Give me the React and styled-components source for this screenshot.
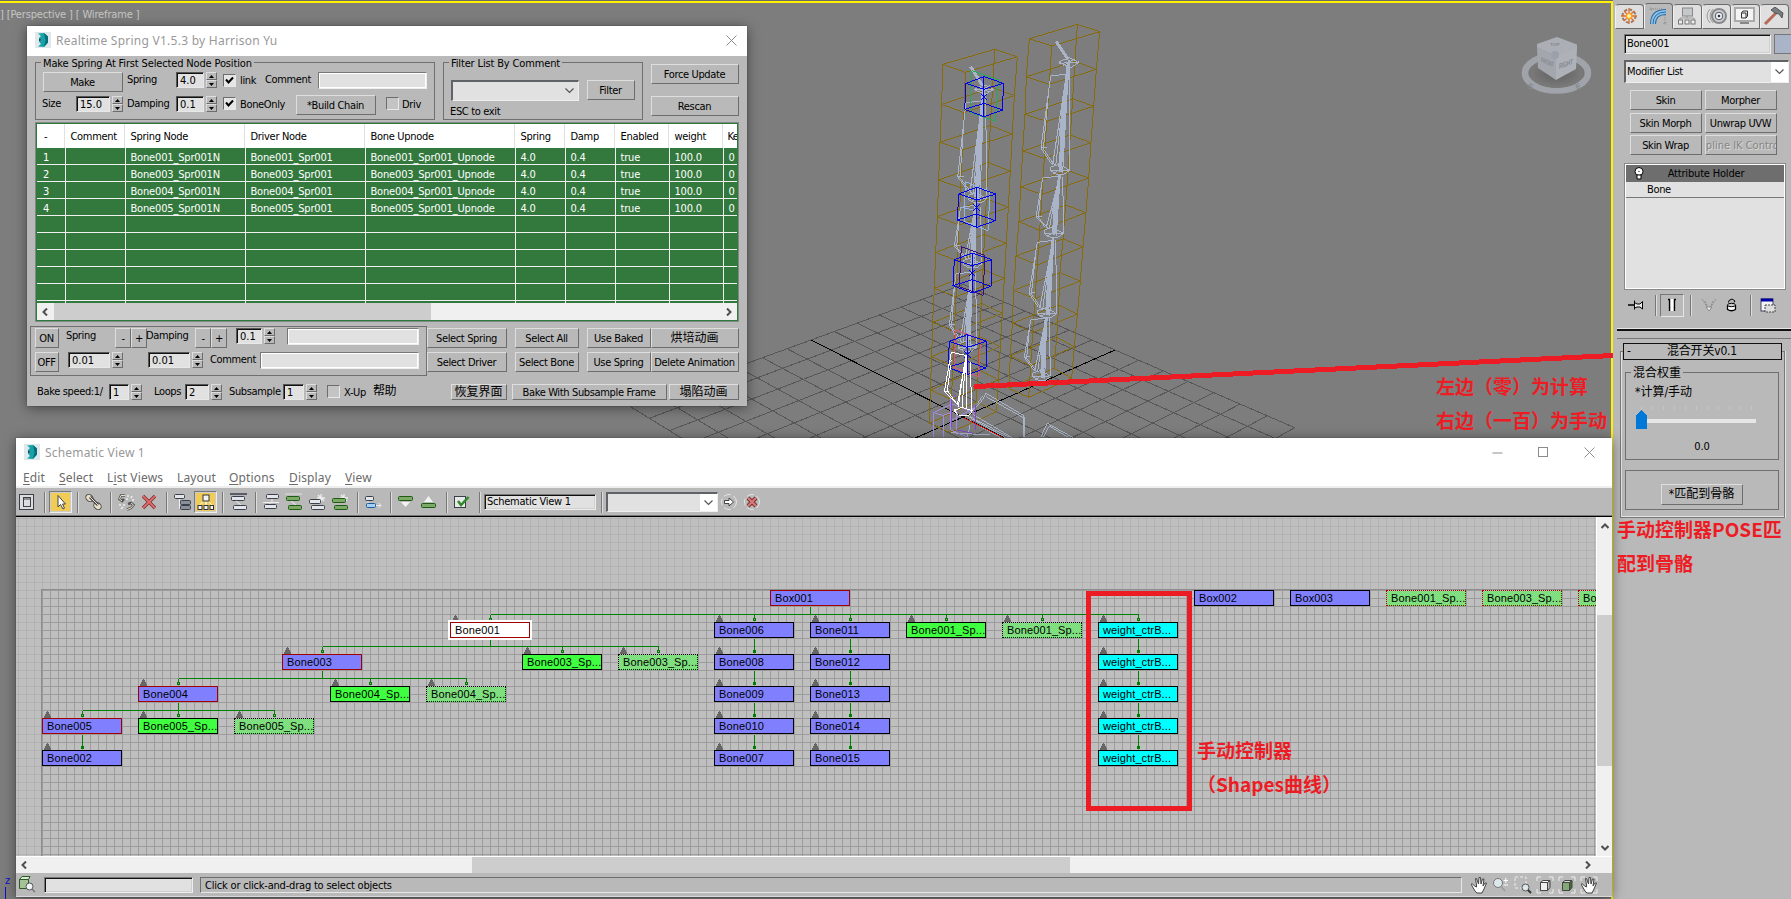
import React from "react";
import styled, { createGlobalStyle, css } from "styled-components";

const Global = createGlobalStyle`
  * { box-sizing: border-box; }
  body { margin: 0; overflow: hidden; background: #7d7d7d; }
`;

const ui = `"DejaVu Sans Condensed", "DejaVu Sans", "Noto Sans CJK SC", sans-serif`;
const caption = `"Noto Sans", "Noto Sans CJK SC", sans-serif`;
const face = "#b9b9b9";
const field = "#e1e1e1";
const bone = "#a9b4c8";
const red = "#ed1c24";

/* Turns a list of start positions into fixed grid tracks. */
const tracks = (starts) =>
  starts.map((s, i) => (i + 1 < starts.length ? `${starts[i + 1] - s}px` : "max-content")).join(" ");

/* ---------- shared controls ---------- */

const Desktop = styled.div`
  display: flex;
  position: relative;
  width: 1791px;
  height: 899px;
  overflow: hidden;
  font: 11px/15px ${ui};
  font-stretch: condensed;
  letter-spacing: -0.35px;
  color: #000;
`;

const Line = styled.div`
  display: grid;
  grid-template-columns: ${(p) => tracks(p.$at)};
  align-items: start;
  height: ${(p) => p.$h}px;
  white-space: nowrap;
`;

const Label = styled.span`
  margin-top: ${(p) => p.$t || 0}px;
  margin-left: -1px;
  height: 15px;
  white-space: nowrap;
`;

const raised = css`
  border: 1px solid;
  border-color: #dedede #6d6d6d #6d6d6d #dedede;
`;

const Button = styled.div`
  ${raised}
  display: flex;
  align-items: center;
  justify-content: center;
  flex: none;
  width: ${(p) => p.$w}px;
  height: ${(p) => p.$h || 20}px;
  padding-right: ${(p) => (p.$w > 20 ? 1 : 0)}px;
  overflow: hidden;
  white-space: nowrap;
  background: ${face};
  color: ${(p) => (p.$off ? "#858585" : "#000")};
  text-shadow: ${(p) => (p.$off ? "1px 1px 0 #dadada" : "none")};
  font-size: ${(p) => (p.$cjk ? 12 : 11)}px;
  letter-spacing: ${(p) => (p.$cjk ? "0" : p.$off ? "0" : "inherit")};
`;

const Input = styled.div`
  width: ${(p) => p.$w}px;
  height: ${(p) => p.$h}px;
  border: 1px solid;
  border-color: #777 #eee #eee #777;
  box-shadow: inset 1px 1px 0 ${(p) => (p.$dark ? "#111" : "#fff")}, inset -1px -1px 0 ${(p) => (p.$dark ? "#cfcfcf" : "#fff")};
  background: ${field};
  padding: 0 2px;
  line-height: ${(p) => p.$h - 2}px;
  letter-spacing: -0.25px;
`;

const SpinBox = styled.div`
  display: flex;
  gap: 2px;
  width: ${(p) => p.$w}px;
  height: 16px;
  margin-top: ${(p) => p.$t || 0}px;
`;
const SpinField = styled.div`
  flex: 1;
  border: 1px solid;
  border-color: #555 #e8e8e8 #e8e8e8 #555;
  box-shadow: inset 1px 1px 0 #111;
  background: ${field};
  padding-left: 3px;
  line-height: 15px;
  letter-spacing: 0;
`;
const SpinArrows = styled.div`
  display: flex;
  flex-direction: column;
  width: 11px;
`;
const SpinArrow = styled.div`
  ${raised}
  flex: 1;
  display: flex;
  align-items: center;
  justify-content: center;
  svg { display: block; }
`;

function Spinner({ w, t, children }) {
  return (
    <SpinBox $w={w} $t={t}>
      <SpinField>{children}</SpinField>
      <SpinArrows>
        <SpinArrow><svg width="5" height="3"><path d="M0 3L2.5 0L5 3Z" /></svg></SpinArrow>
        <SpinArrow><svg width="5" height="3"><path d="M0 0L2.5 3L5 0Z" /></svg></SpinArrow>
      </SpinArrows>
    </SpinBox>
  );
}

const CheckFrame = styled.div`
  width: 13px;
  height: 13px;
  margin-top: ${(p) => p.$t}px;
  border: 1px solid;
  border-color: #6d6d6d #e8e8e8 #e8e8e8 #6d6d6d;
  background: ${(p) => (p.$on ? "#e6e6e6" : "#c4c4c4")};
  svg { display: block; }
`;
const Check = ({ on, t }) => (
  <CheckFrame $on={on} $t={t}>
    {on && <svg width="11" height="11"><path d="M2 4.5L4.5 7.5L9 2.5" fill="none" stroke="#000" strokeWidth="2" /></svg>}
  </CheckFrame>
);

const Group = styled.div`
  position: relative;
  flex: none;
  width: ${(p) => p.$w}px;
  height: ${(p) => p.$h}px;
  margin-left: ${(p) => p.$ml || 0}px;
  padding: ${(p) => p.$pad || "0"};
  border: 1px solid #6f6f6f;
`;
const Legend = styled.span`
  position: absolute;
  top: -7px;
  left: 5px;
  padding: 0 2px;
  background: ${face};
  white-space: nowrap;
  font-size: ${(p) => (p.$cjk ? 12 : 11)}px;
  letter-spacing: ${(p) => (p.$cjk ? 0 : -0.15)}px;
`;

const Combo = styled.div`
  display: flex;
  width: ${(p) => p.$w}px;
  height: ${(p) => p.$h}px;
  border: 2px solid;
  border-width: 2px 1px 1px 2px;
  border-color: #5f6368 #eee #eee #5f6368;
  background: ${field};
  padding-left: 1px;
`;
const ComboText = styled.div`
  flex: 1;
  line-height: ${(p) => p.$lh || 18}px;
`;
const ComboDrop = styled.div`
  display: flex;
  align-items: center;
  justify-content: center;
  width: 17px;
  background: ${(p) => (p.$white ? "#fff" : "transparent")};
`;
const Chevron = () => (
  <svg width="9" height="6"><path d="M.5 .5L4.5 4.5L8.5 .5" fill="none" stroke="#555" strokeWidth="1.2" /></svg>
);

/* ---------- viewport scene ---------- */

const Viewport = styled.div`
  position: relative;
  flex: none;
  width: 1613px;
  height: 899px;
  background: #7d7d7d;
  border-top: 1px solid #6c6c6c;
  svg.scene { display: block; margin-top: -1px; }
`;
const ViewFrame = styled.div`
  position: absolute;
  inset: 0 0 0 -2px;
  border: 2px solid #fff200;
  border-bottom-width: 0;
`;
const ViewLabel = styled.div`
  position: absolute;
  left: 0;
  top: 6px;
  color: #c6c6c6;
  letter-spacing: -0.15px;
  white-space: pre;
`;

const K = [963.3, 284.4], P2 = [1115, 350], C = [963, 417], P1 = [811, 340];
const floor = (() => {
  const sx = K[0] - P2[0] + C[0] - P1[0], sy = K[1] - P2[1] + C[1] - P1[1];
  const ax = P2[0] - C[0], ay = P2[1] - C[1], bx = P1[0] - C[0], by = P1[1] - C[1];
  const det = ax * by - bx * ay;
  const g = (sx * by - bx * sy) / det, h = (ax * sy - sx * ay) / det;
  return (u, v) => {
    const w = g * u + h * v + 1;
    const x = ((P2[0] - K[0] + g * P2[0]) * u + (P1[0] - K[0] + h * P1[0]) * v + K[0]) / w;
    const y = ((P2[1] - K[1] + g * P2[1]) * u + (P1[1] - K[1] + h * P1[1]) * v + K[1]) / w;
    return `${x.toFixed(1)} ${y.toFixed(1)}`;
  };
})();
const gridPath = Array.from({ length: 15 }, (_, i) => i)
  .filter((i) => i !== 7)
  .map((i) => `M${floor(i / 7, 0)}L${floor(i / 7, 2)}M${floor(0, i / 7)}L${floor(2, i / 7)}`)
  .join("");
const axisPath = `M${floor(1, 0)}L${floor(1, 2)}M${floor(0, 1)}L${floor(2, 1)}`;

const tower = (A, B, Cc, D) => {
  let d = A.map((a, i) => `M${a}L${B[i]}L${Cc[i]}L${D[i]}Z`).join("");
  for (const e of [A, B, Cc, D]) d += `M${e.join("L")}`;
  return d;
};
const zip = (xs, ys) => xs.map((x, i) => `${x} ${ys[i]}`);
const leftTower = tower(
  zip([158, 155, 150, 146, 142, 137, 133, 128, 125, 121, 118], [193, 313, 427, 540, 650, 757, 865, 967, 1070, 1170, 1270]),
  zip([314, 308, 301, 295, 289, 284, 279, 274, 269, 264, 259], [148, 263, 377, 487, 597, 703, 808, 910, 1010, 1108, 1205]),
  zip([382, 373, 367, 361, 355, 349, 343, 337, 331, 325, 320], [170, 287, 402, 514, 622, 730, 835, 940, 1040, 1140, 1235]),
  zip([226, 222, 217, 212, 207, 203, 198, 193, 189, 184, 180], [217, 338, 450, 563, 675, 783, 890, 995, 1098, 1198, 1298])
);
const rightTower = tower(
  zip([418, 409, 405, 398, 392, 387, 378, 371, 367, 361, 356], [116, 230, 343, 453, 561, 665, 768, 871, 970, 1068, 1165]),
  zip([562, 555, 548, 541, 534, 527, 519, 510, 506, 500, 492], [73, 184, 296, 405, 512, 615, 717, 818, 915, 1012, 1105]),
  zip([629, 619, 611, 603, 596, 588, 579, 571, 562, 553, 545], [95, 208, 319, 428, 534, 638, 741, 843, 942, 1040, 1135]),
  zip([485, 478, 470, 463, 456, 449, 442, 435, 428, 422, 416], [138, 253, 364, 475, 583, 691, 795, 896, 998, 1097, 1192])
);

/* One bone: a spindle fanning from its upper joint (x1,y1) to a ring at (x2,y2), a side fin and a right-hand edge. */
const boneShape = (x1, y1, x2, y2, finTop, finBottom, rightX) => {
  const [fx, fy] = finTop, [gx, gy] = finBottom;
  return [
    `M${x1} ${y1}L${x2 - 22} ${y2 - 20}M${x1 - 2} ${y1}L${x2 - 13} ${y2 - 18}M${x1} ${y1}L${x2 - 4} ${y2 - 14}M${x1 + 2} ${y1}L${x2 + 3} ${y2 - 6}M${x1 + 2} ${y1}L${x2 + 8} ${y2 + 4}M${x1 - 4} ${y1 + 30}L${x2 - 22} ${y2 - 24}`,
    `M${rightX} ${y1}L${rightX + 3} ${y2 - 4}`,
    `M${x2 - 27} ${y2 - 14}L${x2 - 4} ${y2 - 22}L${rightX + 3} ${y2 - 4}L${x2 + 12} ${y2 + 8}L${x2 - 10} ${y2 + 8}L${x2 - 27} ${y2 - 2}Z`,
    `M${x2 - 27} ${y2 - 4}L${rightX} ${y2 - 4}M${x2 - 20} ${y2 + 5}L${x2 + 10} ${y2 - 12}`,
    `M${x1} ${fy - 6}L${fx} ${fy}L${gx} ${gy}L${x2 - 26} ${y2 - 24}M${fx - 4} ${fy + 24}L${gx + 7} ${gy + 3}L${x2 - 14} ${y2 - 16}M${gx} ${gy}L${gx + 18} ${gy - 2}`,
  ].join("");
};
/* Solid upper part of a bone, where its edges run together. */
const boneCore = (x1, y1, x2, y2) => {
  const mx = x1 + (x2 - x1) * 0.55, my = y1 + (y2 - y1) * 0.55;
  return `M${x1 - 4} ${y1}L${x1 + 4} ${y1}L${mx + 7} ${my}L${x2 + 5} ${y2}L${x2 - 3} ${y2}L${mx - 9} ${my}Z`;
};
const joints = [
  [534, 190, 510, 515], [508, 530, 491, 704], [489, 720, 471, 945], [468, 955, 456, 1133],
  [279, 280, 258, 590], [256, 620, 247, 790], [245, 820, 232, 1040],
];
const cube = (x, y) =>
  `M${x} ${y}l54 -20l58 20l-58 18zM${x - 4} ${y + 78}l58 -18l56 20l-56 20zM${x} ${y}l-4 78M${x + 54} ${y - 20}v80M${x + 112} ${y}l-2 80M${x + 54} ${y + 18}v82M${x + 44} ${y + 30}l20 20M${x + 64} ${y + 30}l-20 20`;

const Scene = () => (
  <svg className="scene" width="1613" height="899" shapeRendering="crispEdges" fill="none">
    <path d={gridPath} stroke="#575757" />
    <path d={axisPath} stroke="#000" />
    <g transform="translate(890 0) scale(.33333)" strokeWidth="3">
      <path d={rightTower + leftTower} stroke="#866c0c" />
      <path d={joints.map((j) => boneCore(...j)).join("")} fill={bone} />
      <g stroke={bone}>
        <path strokeWidth="9" d="M498 124L534 178M242 200L277 256" />
        <path d="M508 186L537 172L566 188L540 204ZM508 190L566 186M520 196L556 176M252 268L281 254L312 268L285 284ZM252 268L312 268M266 276L300 256M266 258L296 276" />
        <path strokeWidth="7" d="M537 180L510 515M509 525L490 700M490 710L470 945M470 950L456 1130M281 270L256 590M257 610L247 790M247 800L232 1040" />
        <path d={boneShape(534, 190, 510, 515, [482, 228], [453, 444], 537)} />
        <path d={boneShape(508, 530, 491, 704, [458, 534], [438, 650], 518)} />
        <path d={boneShape(489, 720, 471, 945, [442, 727], [417, 880], 497)} />
        <path d={boneShape(468, 955, 456, 1133, [422, 960], [403, 1072], 478)} />
        <path d={boneShape(279, 280, 262, 600, [228, 308], [203, 530], 287)} />
        <path d={boneShape(256, 620, 247, 796, [212, 622], [193, 738], 272)} />
        <path d={boneShape(245, 820, 232, 1046, [198, 822], [178, 975], 257)} />
        <path d="M272 1208L288 1180L400 1246V1312M262 1212L278 1188M288 1190L402 1254V1312M404 1250V1312M235 1250L345 1312M240 1250L358 1312M250 1244L365 1312M236 1240L272 1208M240 1262L330 1312M452 1312L472 1270L548 1312M460 1312L478 1278L535 1312M182 1298L300 1305M240 1275L232 1312" />
      </g>
      <path d="M245 212L326 240L316 364L240 336ZM326 240V250" stroke="#1fae5c" />
      <path d="M226 545L300 575L294 692L222 664ZM212 622L250 630" stroke="#8fb4e8" />
      <path d="M214 740L284 766L280 886L208 860Z" stroke="#3b0f7a" />
      <path d="M198 990L272 1018L265 1130L192 1102Z" stroke="#e0508a" />
      <path d={cube(228, 250) + cube(206, 582) + cube(193, 779) + cube(178, 1024)} stroke="#0000f0" />
      <path d="M130 1312V1238L186 1212L256 1240V1290M130 1238L160 1246V1312M160 1246L200 1232V1290M182 1190V1290L236 1312M182 1262L256 1222" stroke="#a38be0" />
      <path d="M188 1182L200 1192M184 1195V1280M256 1215V1290M200 1290L250 1300" stroke="#8448c8" />
      <path stroke="#fff" d="M228 1066L184 1057L177 1095L163 1175L205 1216M182 1095L172 1172L198 1208M228 1070L202 1215M222 1100L205 1220M226 1090L216 1225M231 1066V1225M228 1066V1120M240 1085L246 1235M192 1232L215 1222L248 1232L236 1246L206 1246ZM192 1226L200 1240M176 1095L184 1080M163 1175H176" />
      <path d="M222 1254L338 1312" stroke="#d01818" />
    </g>
    <ViewCube />
    <path d="M5.500 887V899" stroke="#1010c8" />
  </svg>
);

const CubeLetter = styled.text`
  font: bold 8px "Liberation Sans", sans-serif;
  letter-spacing: -0.4px;
  fill: #858a91;
`;
const ViewCube = () => (
  <g shapeRendering="auto">
    <defs>
      <radialGradient id="well"><stop offset="0" stopColor="#5f5f5f" /><stop offset="1" stopColor="#808080" /></radialGradient>
    </defs>
    <ellipse cx="1556.500" cy="73" rx="31.500" ry="17.500" fill="url(#well)" stroke="#a0a4aa" strokeWidth="6.500" />
    <ellipse cx="1556.500" cy="73" rx="27" ry="14.500" stroke="#757575" />
    <path d="M1557 37L1577 44.500V49L1556.500 56L1537 47.500V44Z" fill="#abafb5" />
    <path d="M1537 47L1556 56V80L1538 68Z" fill="#a3a7ad" />
    <path d="M1577 48L1556 56V80L1576 69Z" fill="#aeb2b8" />
    <circle cx="1555" cy="55" r="4" fill="#9aa1aa" />
    <CubeLetter transform="translate(1541 62) skewY(22) scale(.5 .9)">FRONT</CubeLetter>
    <CubeLetter transform="translate(1559 69) skewY(-20) scale(.6 .95)">RIGHT</CubeLetter>
    <CubeLetter transform="translate(1550 46) scale(.65 .55)">TOP</CubeLetter>
    <CubeLetter transform="translate(1527 88) rotate(20)">S</CubeLetter>
    <CubeLetter transform="translate(1577 90) rotate(-25)">E</CubeLetter>
  </g>
);
const AxisLetter = styled.div`
  position: absolute;
  left: 5px;
  top: 872px;
  color: #1010c8;
`;

/* ---------- floating windows ---------- */

const Window = styled.div`
  position: absolute;
  left: ${(p) => p.$x}px;
  top: ${(p) => p.$y}px;
  width: ${(p) => p.$w}px;
  height: ${(p) => p.$h}px;
  display: flex;
  flex-direction: column;
  background: ${face};
  box-shadow: 0 2px 12px rgba(0, 0, 0, 0.45), 0 0 1px rgba(0, 0, 0, 0.5);
  overflow: hidden;
  isolation: isolate;
`;
const TitleBar = styled.div`
  display: flex;
  align-items: center;
  flex: none;
  height: ${(p) => p.$h}px;
  padding: 0 0 ${(p) => p.$pb || 0}px 8px;
  gap: 5px;
  background: #fff;
  color: #999;
  font: 12px ${caption};
  letter-spacing: ${(p) => p.$ls}px;
  svg { flex: none; }
`;
const TitleText = styled.span`
  flex: 1;
`;
const AppMark = () => (
  <svg width="16" height="16">
    <rect width="16" height="16" fill="#dfe9ec" />
    <path d="M3 1.500L9 1L13 4.500V10.500L9 15L3 14.500L6 12L4 9.500L7 8L4 6L6 4Z" fill="#14a3a8" />
    <path d="M9 1L13 4.500V10.500L9 15L10.500 8Z" fill="#0a6e78" />
    <path d="M4 6L7 8L4 9.500Z" fill="#0b4f5c" />
  </svg>
);
const CaptionButtons = styled.div`
  display: flex;
  gap: ${(p) => p.$gap || 0}px;
  padding-right: ${(p) => p.$pr}px;
  svg { display: block; fill: none; stroke: #8c8c8c; }
`;
const CloseMark = () => <svg width="11" height="11"><path d="M.5 .5L10.500 10.500M10.500 .5L.5 10.500" /></svg>;

/* Spring list */
const TopRow = styled.div`
  display: flex;
  height: 66px;
  padding: 6px 0 0 8px;
`;
const SideButtons = styled.div`
  display: flex;
  flex-direction: column;
  gap: 12px;
  padding: 2px 0 0 8px;
`;
const FilterRow = styled.div`
  display: flex;
  gap: 8px;
  height: 24px;
`;
const ListFrame = styled.div`
  flex: none;
  width: 704px;
  height: 200px;
  margin-left: 8px;
  border: 1px solid #7f8a86;
  box-shadow: inset 0 0 0 1px #2e7a3c;
  padding: 1px;
  overflow: hidden;
`;
const listGrid = "60px 120px 120px 150px 50px 50px 54px 54px 14px";
const ListHead = styled.div`
  display: grid;
  grid-template-columns: 28px ${listGrid};
  height: 24px;
  background: #fff;
  letter-spacing: -0.3px;
`;
const HeadCell = styled.div`
  border-right: 1px solid #e0e0e0;
  padding-left: 5.5px;
  line-height: 25px;
  overflow: hidden;
  white-space: nowrap;
  &:first-child { padding-left: 7px; }
  &:last-child { padding-left: 4.5px; border-right: 0; letter-spacing: -0.8px; }
`;
const ListBody = styled.div`
  height: 155px;
  overflow: hidden;
  background: #33783d;
  color: #fff;
  letter-spacing: -0.17px;
`;
const ListRow = styled.div`
  display: grid;
  grid-template-columns: 29px ${listGrid};
  height: 17px;
  border-bottom: 1px solid #f0f0f0;
`;
const ListCell = styled.div`
  border-right: 1px solid #f0f0f0;
  padding-left: 4.5px;
  line-height: 20px;
  height: 16px;
  overflow: hidden;
  white-space: nowrap;
  &:first-child { padding-left: 6px; }
`;
const HBar = styled.div`
  display: flex;
  align-items: center;
  height: ${(p) => p.$h}px;
  background: #f0f0f0;
  svg { fill: none; stroke: #4f4f4f; stroke-width: 2; }
`;
const HThumb = styled.div`
  width: ${(p) => p.$w}px;
  height: 100%;
  margin: 0 auto 0 ${(p) => p.$ml}px;
  background: #cdcdcd;
`;
const BarArrow = styled.div`
  display: flex;
  align-items: center;
  justify-content: center;
  width: 16px;
  height: 17px;
`;
const BottomRow = styled.div`
  display: flex;
  height: 62px;
  padding: 4px 0 0 3px;
`;
const ActionRows = styled.div`
  padding-top: 2px;
`;

const heads = ["-", "Comment", "Spring Node", "Driver Node", "Bone Upnode", "Spring", "Damp", "Enabled", "weight", "Ke"];
const rows = ["001", "003", "004", "005"].map((n, i) => [
  String(i + 1), "", `Bone${n}_Spr001N`, `Bone${n}_Spr001`, `Bone${n}_Spr001_Upnode`, "4.0", "0.4", "true", "100.0", "0",
]);
const blank = Array(10).fill("");

const SpringWindow = () => (
  <Window $x={27} $y={26} $w={720} $h={380}>
    <TitleBar $h={30} $pb={2} $ls={0.25}>
      <AppMark />
      <TitleText>Realtime Spring V1.5.3 by Harrison Yu</TitleText>
      <CaptionButtons $pr={10}><CloseMark /></CaptionButtons>
    </TitleBar>
    <TopRow>
      <Group $w={400} $h={58} $pad="9px 0 0 7px">
        <Legend>Make Spring At First Selected Node Position</Legend>
        <Line $h={23} $at={[43, 128, 176, 223, 241, 266, 318]}>
          <Button $w={80}>Make</Button>
          <Label>Spring</Label>
          <Spinner w={41}>4.0</Spinner>
          <Check on t={2} />
          <Label $t={1}>link</Label>
          <Label>Comment</Label>
          <Input $w={109} $h={17} />
        </Line>
        <Line $h={23} $at={[43, 76, 128, 176, 223, 241, 296, 386, 403]}>
          <Label $t={1}>Size</Label>
          <Spinner w={47} t={1}>15.0</Spinner>
          <Label $t={1}>Damping</Label>
          <Spinner w={41} t={1}>0.1</Spinner>
          <Check on t={2} />
          <Label $t={2}>BoneOnly</Label>
          <Button $w={80}>*Build Chain</Button>
          <Check t={2} />
          <Label $t={2}>Driv</Label>
        </Line>
      </Group>
      <Group $w={200} $h={58} $ml={8} $pad="17px 0 0 7px">
        <Legend>Filter List By Comment</Legend>
        <FilterRow>
          <Combo $w={128} $h={21}><ComboText /><ComboDrop><Chevron /></ComboDrop></Combo>
          <Button $w={48}>Filter</Button>
        </FilterRow>
        <Label>ESC to exit</Label>
      </Group>
      <SideButtons>
        <Button $w={88}>Force Update</Button>
        <Button $w={88}>Rescan</Button>
      </SideButtons>
    </TopRow>
    <ListFrame>
      <ListHead>{heads.map((h) => <HeadCell key={h}>{h}</HeadCell>)}</ListHead>
      <ListBody>
        {[...rows, blank, blank, blank, blank, blank, blank].map((r, i) => (
          <ListRow key={i}>{r.map((c, j) => <ListCell key={j}>{c}</ListCell>)}</ListRow>
        ))}
      </ListBody>
      <HBar $h={17}>
        <BarArrow><svg width="6" height="8"><path d="M5 .5L1.500 4L5 7.500" /></svg></BarArrow>
        <HThumb $w={377} $ml={1} />
        <BarArrow><svg width="6" height="8"><path d="M1 .5L4.500 4L1 7.500" /></svg></BarArrow>
      </HBar>
    </ListFrame>
    <BottomRow>
      <Group $w={397} $h={50} $pad="1px 0 0 4px">
        <Line $h={24} $at={[35, 67, 115, 131, 147, 195, 211, 236, 287]}>
          <Button $w={24}>ON</Button>
          <Label>Spring</Label>
          <Button $w={16}>-</Button>
          <Button $w={16}>+</Button>
          <Label>Damping</Label>
          <Button $w={16}>-</Button>
          <Button $w={16}>+</Button>
          <Spinner w={39}>0.1</Spinner>
          <Input $w={132} $h={17} />
        </Line>
        <Line $h={22} $at={[35, 68, 148, 211, 260]}>
          <Button $w={24}>OFF</Button>
          <Spinner w={55}>0.01</Spinner>
          <Spinner w={55}>0.01</Spinner>
          <Label>Comment</Label>
          <Input $w={159} $h={17} />
        </Line>
      </Group>
      <ActionRows>
        <Line $h={24} $at={[427, 515, 587, 651]}>
          <Button $w={80}>Select Spring</Button>
          <Button $w={64}>Select All</Button>
          <Button $w={64}>Use Baked</Button>
          <Button $w={88} $cjk>烘培动画</Button>
        </Line>
        <Line $h={24} $at={[427, 515, 587, 651]}>
          <Button $w={80}>Select Driver</Button>
          <Button $w={64}>Select Bone</Button>
          <Button $w={64}>Use Spring</Button>
          <Button $w={88}>Delete Animation</Button>
        </Line>
      </ActionRows>
    </BottomRow>
    <BakeLine $h={16} $at={[38, 109, 155, 185, 230, 283, 327, 345, 374, 451, 512, 669]}>
      <Label>Bake speed:1/</Label>
      <Spinner w={33}>1</Spinner>
      <Label>Loops</Label>
      <Spinner w={37}>2</Spinner>
      <Label>Subsample</Label>
      <Spinner w={34}>1</Spinner>
      <Check t={1} />
      <Label $t={1}>X-Up</Label>
      <CjkLabel>帮助</CjkLabel>
      <Button $w={56} $h={16} $cjk>恢复界面</Button>
      <Button $w={155} $h={16}>Bake With Subsample Frame</Button>
      <Button $w={70} $h={16} $cjk>塌陷动画</Button>
    </BakeLine>
  </Window>
);
const BakeLine = styled(Line)`
  margin-left: 11px;
`;
const CjkLabel = styled(Label)`
  font-size: 12px;
  letter-spacing: -0.5px;
`;

/* ---------- schematic window ---------- */

const MenuBar = styled.div`
  display: grid;
  grid-template-columns: ${tracks([23, 59, 107, 177, 229, 289, 345])};
  height: 22px;
  flex: none;
  padding: 3px 0 0 7px;
  background: #fff;
  color: #6a6a6a;
  font: 12px/17px ${caption};
  letter-spacing: 0.15px;
  border-bottom: 2px solid #eee;
  u { text-underline-offset: 2px; }
`;
const Toolbar = styled.div`
  display: grid;
  grid-template-columns: ${(p) => tracks(p.$at)};
  align-items: center;
  height: 29px;
  flex: none;
  padding-left: 3px;
  border-bottom: 1px solid #000;
  box-shadow: inset 0 -1px 0 #777;
  svg { display: block; fill: none; }
`;
const Divider = styled.div`
  width: 2px;
  height: 21px;
  border-left: 1px solid #777;
  border-right: 1px solid #ddd;
`;
const Pressed = styled.div`
  display: flex;
  align-items: center;
  justify-content: center;
  width: 23px;
  height: 22px;
  border: 1px solid;
  border-color: #777 #eee #eee #777;
  box-shadow: inset 0 0 0 1px #ccc;
  background: #f0cb56;
`;
const Icon = ({ children }) => <svg width="18" height="18">{children}</svg>;

const ink = "#3a3f4a";
const Bar = ({ x, y, w = 13, fill = "#e4e6ec", stroke = ink }) => (
  <rect x={x + 0.5} y={y + 0.5} width={w} height="4" rx="1" fill={fill} stroke={stroke} />
);
const green = { fill: "#7da968", stroke: "#1d5a12" };
const Star = ({ x, y }) => <path d={`M${x} ${y - 4}V${y + 4}M${x - 4} ${y}H${x + 4}M${x - 3} ${y - 3}L${x + 3} ${y + 3}`} stroke="#eee" strokeWidth="1.300" />;

const Canvas = styled.div`
  position: relative;
  flex: 1;
  overflow: hidden;
  background: #bfbfbf;
  background-image: linear-gradient(90deg, transparent 2px, #b2b2b2 2px, #b2b2b2 3px, transparent 3px),
    linear-gradient(transparent 1px, #b2b2b2 1px, #b2b2b2 2px, transparent 2px);
  background-size: 8px 8px;
`;
const Sheet = styled.div`
  position: absolute;
  left: 25px;
  top: 72px;
  right: 0;
  bottom: 0;
  border: 1px solid #8c8c8c;
  border-width: 1px 0 0 1px;
  background-color: #bfbfbf;
  background-image: linear-gradient(90deg, #9c9c9c 1px, transparent 1px), linear-gradient(#9c9c9c 1px, transparent 1px);
  background-size: 8px 8px;
`;
const Links = styled.svg`
  position: absolute;
  inset: 0;
  fill: none;
`;
const dither = "conic-gradient(#40ff40 25%, #bfbfbf 0 50%, #40ff40 0 75%, #bfbfbf 0) 0 0 / 2px 2px";
const kinds = {
  bone: { bg: "#8080ff", bd: "1px solid #000" },
  boneRed: { bg: "#8080ff", bd: "1px solid #a00000" },
  picked: { bg: "#fff", bd: "1px solid #a00000" },
  green: { bg: "#40ff40", bd: "1px solid #000" },
  pale: { bg: dither, bd: "1px dotted #000" },
  paleRed: { bg: dither, bd: "1px dotted #a00000" },
  cyan: { bg: "#00ffff", bd: "1px solid #000" },
};
const Node = styled.div`
  position: absolute;
  left: ${(p) => p.$x - 16}px;
  top: ${(p) => p.$y - 517}px;
  width: 80px;
  height: 16px;
  padding-left: 4px;
  border: ${(p) => kinds[p.$kind].bd};
  background: ${(p) => kinds[p.$kind].bg};
  box-shadow: ${(p) => (p.$kind === "picked" ? "0 0 0 2px #fff" : "none")};
  color: #000;
  font: 11px/14px "Liberation Sans", sans-serif;
  letter-spacing: ${(p) => (p.$kind === "cyan" ? 0.1 : 0.12)}px;
  white-space: nowrap;
`;

const Y = [590, 622, 654, 686, 718, 750];
const nodes = [
  ["Box001", 770, 0, "boneRed"], ["Bone001", 450, 1, "picked"],
  ["Bone003", 282, 2, "boneRed"], ["Bone003_Sp...", 522, 2, "green"], ["Bone003_Sp...", 618, 2, "pale"],
  ["Bone004", 138, 3, "boneRed"], ["Bone004_Sp...", 330, 3, "green"], ["Bone004_Sp...", 426, 3, "pale"],
  ["Bone005", 42, 4, "boneRed"], ["Bone005_Sp...", 138, 4, "green"], ["Bone005_Sp...", 234, 4, "pale"],
  ["Bone002", 42, 5, "bone"],
  ...["Bone006", "Bone008", "Bone009", "Bone010", "Bone007"].map((n, i) => [n, 714, i + 1, "bone"]),
  ...["Bone011", "Bone012", "Bone013", "Bone014", "Bone015"].map((n, i) => [n, 810, i + 1, "bone"]),
  ["Bone001_Sp...", 906, 1, "green"], ["Bone001_Sp...", 1002, 1, "pale"],
  ...[1, 2, 3, 4, 5].map((i) => ["weight_ctrB...", 1098, i, "cyan"]),
  ["Box002", 1194, 0, "bone"], ["Box003", 1290, 0, "bone"],
  ["Bone001_Sp...", 1386, 0, "paleRed"], ["Bone003_Sp...", 1482, 0, "paleRed"], ["Bone004_Sp...", 1578, 0, "paleRed"],
];
const buses = [[810, 614, 490, 1138], [490, 646, 322, 658], [322, 678, 178, 466], [178, 710, 82, 274]];
const stems = [714, 810, 1098].flatMap((x) => [1, 2, 3, 4].map((r) => [x + 40, Y[r] + 16])).concat([[82, 734]]);

const Schematic = () => (
  <Canvas>
    <Sheet />
    <Links width="1580" height="340" shapeRendering="crispEdges">
      <g transform="translate(-15.500 -516.500)" stroke="#008000">
        {buses.map(([p, y, a, b]) => <path key={y} d={`M${p} ${y - 8}V${y}M${a} ${y}H${b}`} />)}
        {stems.map(([x, y]) => <path key={`${x}-${y}`} d={`M${x} ${y}V${y + 14}`} />)}
        {nodes.filter((n) => n[2] > 0).map(([, x, r]) => (
          <g key={`${x}-${r}`}>
            <path d={`M${x + 40} ${Y[r] - 8}V${Y[r] - 4}`} />
            <rect x={x + 39} y={Y[r] - 4} width="2" height="2" />
            <path d={`M${x + 1} ${Y[r]}L${x + 4.5} ${Y[r] - 8}L${x + 5.5} ${Y[r] - 8}L${x + 9} ${Y[r]}Z`} fill="#666" stroke="none" />
          </g>
        ))}
      </g>
    </Links>
    {nodes.map(([t, x, r, k]) => <Node key={`${x}-${r}`} $x={x} $y={Y[r]} $kind={k}>{t}</Node>)}
  </Canvas>
);

const CanvasRow = styled.div`
  display: flex;
  flex: none;
  height: 339px;
`;
const VBar = styled.div`
  display: flex;
  flex-direction: column;
  align-items: center;
  width: 16px;
  border-left: 1px solid #fff;
  background: #f0f0f0;
  svg { fill: none; stroke: #4f4f4f; stroke-width: 2; }
`;
const VThumb = styled.div`
  width: 100%;
  height: 151px;
  margin: 81px 0 auto;
  background: #cdcdcd;
`;
const StatusBar = styled.div`
  display: flex;
  align-items: center;
  height: 24px;
  padding: 0 4px 0 3px;
  border-bottom: 1px solid #dadada;
  svg { display: block; fill: none; flex: none; }
`;
const StatusText = styled.div`
  flex: 1;
  margin: 0 8px 0 7px;
  height: 16px;
  padding-left: 4px;
  line-height: 15px;
  border: 1px solid;
  border-color: #6d6d6d #e6e6e6 #e6e6e6 #6d6d6d;
  letter-spacing: -0.2px;
`;
const StatusIcons = styled.div`
  display: flex;
  gap: 4px;
  padding-right: 10px;
`;

const Hand = () => (
  <path d="M4.500 10L2 7.500L1.500 9L5 15L7 17H12L14 13L16.500 7L15 7L13 10L14 3L12.500 3L11 8L10.500 1.500H9L8.500 8L6.500 2.500H5.500L6.500 9V11Z" fill="#fff" stroke="#444" />
);
const Brackets = () => <path d="M5 1H1V5M13 1H17V5M5 17H1V13M13 17H17V13" stroke="#eee" />;
const Box3D = ({ a, b, c }) => (
  <g stroke="#444" strokeLinejoin="round">
    <path d="M4.500 6.500H11.500V14.500H4.500Z" fill={a} /><path d="M4.500 6.500L7 4.500H14L11.500 6.500Z" fill={b} /><path d="M11.500 6.500L14 4.500V11.500L11.500 14.500Z" fill={c} />
  </g>
);

const toolAt = [19, 44, 49, 77, 85, 110, 118, 141, 166, 174, 194, 222, 230, 255, 263, 285, 309, 332, 357, 365, 390, 398, 421, 446, 454, 479, 484, 601, 606, 720, 743];

const SchematicWindow = () => (
  <Window $x={16} $y={438} $w={1596} $h={459}>
    <TitleBar $h={28} $ls={0.18}>
      <AppMark />
      <TitleText>Schematic View 1</TitleText>
      <CaptionButtons $gap={35} $pr={17}>
        <svg width="11" height="11"><path d="M.5 6H10.500" /></svg>
        <svg width="11" height="11"><rect x=".5" y=".5" width="9" height="9" /></svg>
        <CloseMark />
      </CaptionButtons>
    </TitleBar>
    <MenuBar>
      <span><u>E</u>dit</span><span><u>S</u>elect</span><span>L<u>i</u>st Views</span><span>Layout</span>
      <span><u>O</u>ptions</span><span><u>D</u>isplay</span><span><u>V</u>iew</span>
    </MenuBar>
    <Toolbar $at={toolAt}>
      <Icon><rect x=".5" y="1.500" width="14" height="15" fill="#ddd" stroke={ink} /><rect x="4.500" y="4.500" width="7" height="9" stroke={ink} /><path d="M4.500 6H11.500" stroke={ink} /></Icon>
      <Divider />
      <Pressed><Icon><path d="M6 2.500V14L8.500 11.500L11 16L12.500 15.200L10.500 11H13.500Z" fill="#fff" stroke="#444" /></Icon></Pressed>
      <Divider />
      <Icon><g stroke="#4a4a4a" fill="#e8e0c8"><ellipse cx="4.500" cy="5" rx="4" ry="3.200" transform="rotate(40 4.500 5)" /><ellipse cx="12.500" cy="13" rx="4" ry="3.200" transform="rotate(40 12.500 13)" /><path d="M5 4L13 12" strokeWidth="3" /><path d="M5 4L13 12" stroke="#e8e0c8" /></g></Icon>
      <Divider />
      <Icon><path d="M7 2.500H3L1.500 6L4 8L6 6M9 16.500L13 15L15.500 12L13 10L10 11" stroke="#555" strokeWidth="2.500" /><path d="M7 2.500H3L1.500 6L4 8M9 16.500L13 15L15.500 12L13 10" stroke="#e8e0c8" /><path d="M10 2v2M14 3l-1 2M8 6h2M14 7h2M1 12h2M5 14l-2 2M6 11v2" stroke="#eee" strokeWidth="1.500" /></Icon>
      <Icon><path d="M2 3L14 15M14 3L2 15" stroke="#7a2a2a" strokeWidth="3.200" /><path d="M2 3L14 15M14 3L2 15" stroke="#e06a6a" strokeWidth="1.800" /></Icon>
      <Divider />
      <Icon><Bar x={0} y={1} w={10} /><path d="M5.500 6V15.500M5.500 10.500H7M5.500 15H7" stroke="#eee" /><Bar x={6} y={7} w={10} fill="#8a8f99" /><Bar x={6} y={12} w={10} fill="#8a8f99" /></Icon>
      <Pressed><Icon><path d="M9 8V11M2.500 12L7 8M15 12L11 8M9 8V12" stroke="#fff" /><g stroke="#333" fill="#f4f4f4"><rect x="6" y="2" width="6" height="6" /><rect x="1" y="12.500" width="4" height="4" /><rect x="7" y="12.500" width="4" height="4" /><rect x="13" y="12.500" width="3.500" height="4" /></g></Icon></Pressed>
      <Divider />
      <Icon><path d="M0 1H17" stroke={ink} strokeWidth="1.500" /><Bar x={1} y={3} w={13} /><path d="M6 8L11 12" stroke="#eee" /><Bar x={3} y={12} w={13} /></Icon>
      <Divider />
      <Icon><Bar x={3} y={1} w={12} /><path d="M0 9.500H16M9 6V9M7 10V12" stroke="#eee" /><Bar x={1} y={11} w={12} /></Icon>
      <Icon><path d="M0 1H17" stroke="#ddd" /><Bar x={1} y={3} w={13} {...green} /><path d="M6 8L11 12" stroke="#eee" /><Bar x={3} y={12} w={13} {...green} /></Icon>
      <Icon><Star x={12} y={5} /><Bar x={0} y={6} w={11} /><Bar x={2} y={12} w={13} /></Icon>
      <Icon><Star x={12} y={5} /><Bar x={0} y={5} w={13} {...green} /><Bar x={2} y={12} w={13} {...green} /></Icon>
      <Divider />
      <Icon><Bar x={0} y={3} w={8} /><path d="M3 8V11M11 12.500H16M13.500 10L16 12.500L13.500 15" stroke="#eee" /><Bar x={1} y={10} w={9} fill="#a9d0f2" stroke="#1b5f9c" /></Icon>
      <Divider />
      <Icon><Bar x={0} y={3} w={14} {...green} /><path d="M3 9H12L7.500 14Z" fill="#f2f2f2" /></Icon>
      <Icon><path d="M3 9H12L7.500 3Z" fill="#f2f2f2" /><Bar x={0} y={10} w={14} {...green} /></Icon>
      <Divider />
      <Icon><rect x=".5" y="3.500" width="11" height="11" fill="#e8e8e8" stroke={ink} /><path d="M4 8L7 12L14.500 4" stroke="#2f8a2a" strokeWidth="2.500" /></Icon>
      <Divider />
      <Input $w={112} $h={16} $dark>Schematic View 1</Input>
      <Divider />
      <Combo $w={112} $h={20}><ComboText /><ComboDrop $white><Chevron /></ComboDrop></Combo>
      <Icon><circle cx="9" cy="9" r="7.500" stroke="#e6e6e6" strokeDasharray="7 3" /><path d="M4.500 7.500H9V5L13.500 9L9 13V10.500H4.500Z" fill="#fff" stroke="#444" /></Icon>
      <Icon><circle cx="9" cy="9" r="7.500" stroke="#e6e6e6" strokeDasharray="7 3" /><path d="M5 5L13 13M13 5L5 13" stroke="#6a2a2a" strokeWidth="4" /><path d="M5 5L13 13M13 5L5 13" stroke="#e07a7a" strokeWidth="2.300" /></Icon>
    </Toolbar>
    <CanvasRow>
      <Schematic />
      <VBar>
        <BarArrow><svg width="8" height="6"><path d="M.5 5L4 1.500L7.500 5" /></svg></BarArrow>
        <VThumb />
        <BarArrow><svg width="8" height="6"><path d="M.5 1L4 4.500L7.500 1" /></svg></BarArrow>
      </VBar>
    </CanvasRow>
    <SchematicHBar $h={17}>
      <BarArrow><svg width="6" height="8"><path d="M5 .5L1.500 4L5 7.500" /></svg></BarArrow>
      <HThumb $w={598} $ml={440} />
      <BarArrow><svg width="6" height="8"><path d="M1 .5L4.500 4L1 7.500" /></svg></BarArrow>
    </SchematicHBar>
    <StatusBar>
      <svg width="25" height="18"><g transform="translate(-4 -3)"><path d="M4.500 6.500H13.500V15.500H4.500Z" fill="#a4c296" stroke="#2c5a24" /><path d="M4.500 6.500L7 3.500H15L13.500 6.500Z" fill="#dbe8d6" stroke="#2c5a24" /></g><circle cx="10.500" cy="10.500" r="3.500" fill="#f0f4f6" stroke="#555" /><path d="M13 13L16 16" stroke="#777" strokeWidth="1.500" /></svg>
      <Input $w={149} $h={16} $dark />
      <StatusText>Click or click-and-drag to select objects</StatusText>
      <StatusIcons>
        <Icon><Hand /></Icon>
        <Icon><circle cx="6" cy="7" r="4.500" fill="#dce8ec" stroke="#777" /><path d="M9.500 11L13 15" stroke="#999" strokeWidth="1.500" /><path d="M11.500 4.500H16M13.800 2V7M11.500 9H16" stroke="#fff" /></Icon>
        <Icon><path d="M1 1H12V12H1Z" stroke="#eee" strokeDasharray="3 2" /><circle cx="11.500" cy="11.500" r="3.500" fill="#dce8ec" stroke="#555" /><path d="M14 14L17 17" stroke="#333" strokeWidth="2" /></Icon>
        <Icon><Brackets /><Box3D a="#eee" b="#fff" c="#bbb" /></Icon>
        <Icon><Brackets /><Box3D a="#86a877" b="#cfe0c8" c="#3f7030" /></Icon>
        <Icon><Brackets /><Hand /></Icon>
      </StatusIcons>
    </StatusBar>
  </Window>
);
const SchematicHBar = styled(HBar)`
  flex: none;
  border-top: 1px solid #fff;
  padding-right: 16px;
`;

/* ---------- command panel ---------- */

const Panel = styled.div`
  flex: 1;
  height: 899px;
  background: ${face};
`;
const Tabs = styled.div`
  display: flex;
  align-items: flex-end;
  height: 29px;
  padding-left: 2px;
`;
const Tab = styled.div`
  display: flex;
  align-items: center;
  justify-content: center;
  width: 29px;
  height: ${(p) => (p.$on ? 26 : 25)}px;
  padding-right: 1px;
  padding-bottom: 1px;
  border: 1px solid #6b6b6b;
  border-left-color: #f0f0f0;
  border-bottom-color: ${(p) => (p.$on ? face : "#6b6b6b")};
  border-radius: 4px 4px 0 0;
  background: ${(p) => (p.$on ? face : "#dfdfdf")};
  svg { fill: none; flex: none; }
`;
const NameRow = styled.div`
  display: flex;
  gap: 3px;
  padding: 5px 0 0 11px;
`;
const Swatch = styled.div`
  flex: 1;
  height: 20px;
  border: 1px solid #777;
  border-right: 0;
  background: #a9b4c8;
`;
const ListPick = styled(Combo)`
  margin: 6px 0 0 11px;
`;
const ModButtons = styled.div`
  display: grid;
  grid-template-columns: 72px 72px;
  grid-template-rows: 23px 22px 20px;
  column-gap: 3px;
  padding: 7px 0 0 17px;
`;
const Stack = styled.div`
  width: 162px;
  height: 127px;
  margin: 8px 0 0 11px;
  border: 1px solid #fff;
  outline: 1px solid #888;
  outline-offset: -1px;
  box-shadow: inset 0 0 0 1px #fff;
  padding: 1px;
  background: ${field};
`;
const StackHead = styled.div`
  display: grid;
  grid-template-columns: 26px 108px;
  align-items: center;
  height: 17px;
  background: #6e6e6e;
  text-align: center;
  letter-spacing: -0.18px;
  svg { margin: 0 0 0 8px; display: block; }
`;
const StackItem = styled.div`
  height: 16px;
  padding-left: 21px;
  line-height: 16px;
  border-bottom: 1px solid #777;
`;
const StackTools = styled.div`
  display: grid;
  grid-template-columns: ${tracks([1628, 1655, 1660, 1690, 1701, 1726, 1750, 1760])};
  align-items: center;
  height: 24px;
  margin-top: 3px;
  padding-left: 15px;
  svg { display: block; fill: none; }
`;
const ToolFrame = styled.div`
  display: flex;
  justify-content: center;
  align-items: center;
  width: 24px;
  height: 23px;
  border: 1px solid;
  border-color: #777 #e6e6e6 #e6e6e6 #777;
`;
const Rule = styled.div`
  margin: 11px 0 0 4px;
  height: 11px;
  border-top: 1px solid #e6e6e6;
  border-bottom: 1px solid #777;
  box-shadow: inset 0 2px 0 #111;
`;
const Rollout = styled.div`
  position: relative;
  width: 165px;
  height: 167px;
  margin: 12px 0 0 7px;
  border: 1px solid #777;
  box-shadow: inset 1px 0 0 #e4e4e4, inset 0 -1px 0 #e4e4e4, 1px 0 0 #e4e4e4;
  padding: 20px 0 0 4px;
`;
const RolloutTitle = styled.div`
  position: absolute;
  top: -9px;
  left: 2px;
  display: grid;
  grid-template-columns: 1fr auto 1fr;
  width: 159px;
  height: 17px;
  padding: 0 4px 0 3px;
  border: 1px solid #111;
  background: ${face};
  font-size: 12px;
  line-height: 15px;
  letter-spacing: -0.2px;
`;
const MatchGroup = styled(Group)`
  display: flex;
  justify-content: center;
  margin-top: 10px;
  padding-top: 13px;
`;
const SliderLabel = styled.div`
  padding: 12px 0 0 9px;
  font-size: 12px;
  letter-spacing: 0;
`;
const SliderArt = styled.svg`
  display: block;
  margin: 6px 0 0 10px;
`;
const SliderValue = styled.div`
  padding-top: 7px;
  text-align: center;
  letter-spacing: 0;
`;

const CommandPanel = () => (
  <Panel>
    <Tabs>
      <Tab><Icon><circle cx="9" cy="9" r="6.500" stroke="#9a7a6a" strokeWidth="2" strokeDasharray="3 2" /><path d="M9 1V17M1 9H17M4 4L14 14M14 4L4 14" stroke="#d8702c" strokeWidth="1.300" /><circle cx="9" cy="9" r="3.500" fill="#f8a030" /><circle cx="9" cy="9" r="2" fill="#fff0a0" /></Icon></Tab>
      <Tab $on><Icon><path d="M4 17Q4 5 17 5" stroke="#2a6aa0" strokeWidth="6" /><path d="M4 17Q4 5 17 5" stroke="#8cc4ec" strokeWidth="4" /><path d="M4 17Q4 5 17 5" stroke="#2a6aa0" /><path d="M1 1h2v2h-2zM15 15h2v2h-2zM4 2H14M16 8V14" stroke="#888" strokeDasharray="1 1" /></Icon></Tab>
      <Tab><Icon><path d="M9 8V11M2 13V11H16V13" stroke="#999" /><rect x="4.500" y="1" width="10" height="8" fill="#c4c8c8" stroke="#888" /><g fill="#eee" stroke="#777"><rect x=".5" y="13" width="4" height="4" /><rect x="7" y="13" width="4" height="4" /><rect x="13" y="13" width="4" height="4" /></g></Icon></Tab>
      <Tab><svg width="22" height="18"><g stroke="#999"><path d="M5 2Q-1 9 5 16M8 2Q2 9 8 16" /></g><circle cx="14" cy="9" r="7" fill="#d0d3d6" stroke="#888" strokeWidth="2" /><circle cx="14" cy="9" r="3.800" fill="#eee" stroke="#4a5668" /><circle cx="14" cy="9" r="1.300" fill="#334" /></svg></Tab>
      <Tab><svg width="22" height="18"><rect x="1" y="1" width="19" height="13" fill="#f4f4f4" stroke="#aaa" strokeWidth="2" /><path d="M7.500 6L9 4H13.500V9L12 11H7.500ZM7.500 6H12V11" stroke="#333" /><path d="M6 16H15" stroke="#888" strokeWidth="2" /></svg></Tab>
      <Tab><svg width="22" height="18"><path d="M2 17L13 6" stroke="#b86a5a" strokeWidth="3" /><path d="M8 3L12 0L20 6L19 11L16 7L12 6Z" fill="#777c82" stroke="#555" /></svg></Tab>
    </Tabs>
    <NameRow><Input $w={147} $h={20} $dark>Bone001</Input><Swatch /></NameRow>
    <ListPick $w={165} $h={23}><ComboText $lh={20}>Modifier List</ComboText><ComboDrop $white><Chevron /></ComboDrop></ListPick>
    <ModButtons>
      <Button $w={72}>Skin</Button><Button $w={72}>Morpher</Button>
      <Button $w={72}>Skin Morph</Button><Button $w={72}>Unwrap UVW</Button>
      <Button $w={72}>Skin Wrap</Button><Button $w={72} $off>Spline IK Control</Button>
    </ModButtons>
    <Stack>
      <StackHead>
        <svg width="10" height="13"><circle cx="5" cy="4.500" r="4" fill="#fff" stroke="#000" /><path d="M3 8h4v4h-4z" fill="#fff" stroke="#000" /><path d="M5 4v1" stroke="#000" /></svg>
        <span>Attribute Holder</span>
      </StackHead>
      <StackItem>Bone</StackItem>
    </Stack>
    <StackTools>
      <svg width="16" height="12"><path d="M0 6H6" stroke="#000" strokeWidth="1.500" /><path d="M6.500 1.500V10.500M6.500 3.500L9 5H12L14.500 2.500V10L12 8H9L6.500 9Z" fill="#eee" stroke="#000" /></svg>
      <Divider />
      <ToolFrame><svg width="10" height="14"><path d="M3.500 1H6.500V13H3.500Z" fill="#fff" /><path d="M1 1.500H3M2.500 1V13M9 1.500H7M7.500 1V13" stroke="#000" strokeWidth="1.300" /></svg></ToolFrame>
      <Divider />
      <svg width="16" height="14"><path d="M1 1L7 10M15 1L9 10M4 3L8 12L12 3" stroke="#8a8a8a" strokeDasharray="2 1" /><path d="M5 9H11L8 13Z" fill="#eee" stroke="#888" /></svg>
      <svg width="12" height="14"><path d="M1.500 7V11.500Q5.500 14 9.500 11.500V7" fill="#fff" stroke="#000" strokeWidth="1.300" /><ellipse cx="5.500" cy="7" rx="4" ry="1.700" fill="#ccc" stroke="#000" /><path d="M2.500 4.500L3 2.500L6 1L9 3L8 4.500" stroke="#000" /></svg>
      <Divider />
      <svg width="17" height="15"><rect x="1" y="1" width="12" height="12" fill="#f4f4f4" stroke="#446" /><path d="M1 2H13" stroke="#0000a0" strokeWidth="3" /><rect x="5" y="7" width="10" height="7" fill="#ddd" stroke="#444" strokeDasharray="2 1" /></svg>
    </StackTools>
    <Rule />
    <Rollout>
      <RolloutTitle><span>-</span><span>混合开关v0.1</span></RolloutTitle>
      <Group $w={154} $h={88}>
        <Legend $cjk>混合权重</Legend>
        <SliderLabel>*计算/手动</SliderLabel>
        <SliderArt width="122" height="26" shapeRendering="crispEdges">
          {Array.from({ length: 11 }, (_, i) => <rect key={i} x={5 + i * 11} y="0" width="1" height="4" fill="#c6c6c6" />)}
          <rect x="11" y="13" width="109" height="4" fill="#e6e6e6" />
          <path d="M0 9L5.500 4L11 9V23H0Z" fill="#0078d7" />
        </SliderArt>
        <SliderValue>0.0</SliderValue>
      </Group>
      <MatchGroup $w={154} $h={40}><Button $w={82} $h={21} $cjk>*匹配到骨骼</Button></MatchGroup>
    </Rollout>
  </Panel>
);

/* ---------- red notes drawn over everything ---------- */

const Note = styled.div`
  position: absolute;
  left: ${(p) => p.$x}px;
  top: ${(p) => p.$y}px;
  color: ${red};
  font: bold 19px/34px "Noto Sans CJK SC", sans-serif;
  letter-spacing: 0;
  white-space: pre;
`;
const NoteFrame = styled.div`
  position: absolute;
  left: 1086px;
  top: 591px;
  width: 106px;
  height: 220px;
  border: 5px solid ${red};
`;
const Pointer = styled.svg`
  position: absolute;
  left: 970px;
  top: 345px;
`;

export default function App() {
  return (
    <Desktop>
      <Global />
      <Viewport>
        <Scene />
        <ViewFrame />
        <ViewLabel>{"] [Perspective ] [ Wireframe ]"}</ViewLabel>
        <AxisLetter>z</AxisLetter>
      </Viewport>
      <CommandPanel />
      <SpringWindow />
      <SchematicWindow />
      <Pointer width="643" height="50">
        <path d="M6 41.500L643 10.500" stroke={red} strokeWidth="5" strokeLinecap="round" shapeRendering="crispEdges" />
      </Pointer>
      <NoteFrame />
      <Note $x={1436} $y={369}>{"左边（零）为计算\n右边（一百）为手动"}</Note>
      <Note $x={1197} $y={733}>{"手动控制器\n（Shapes曲线）"}</Note>
      <Note $x={1617} $y={512}>{"手动控制器POSE匹\n配到骨骼"}</Note>
    </Desktop>
  );
}
